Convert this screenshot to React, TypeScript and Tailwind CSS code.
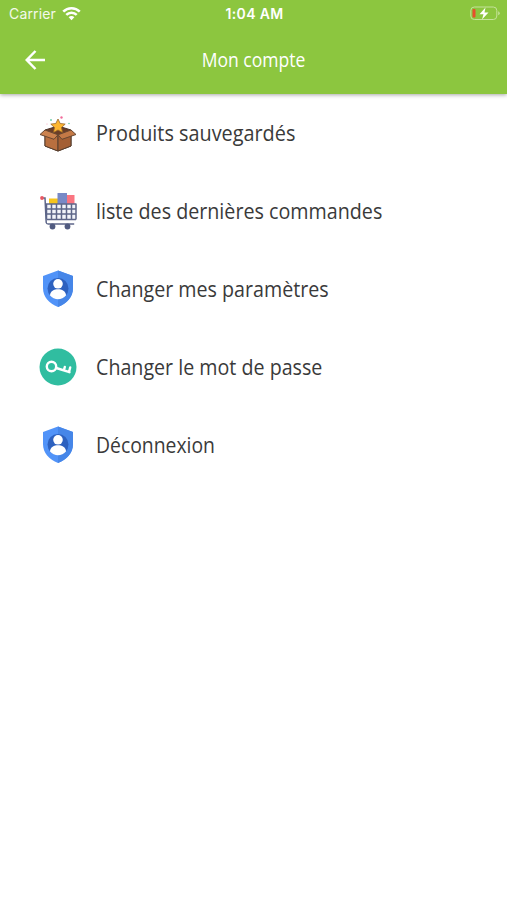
import React from "react";

function BoxIcon() {
  return (
    <svg viewBox="0 0 38 38" className="size-[38px]" strokeLinejoin="round">
      <path d="M6 16 19 12l13 4v16l-13 5-13-5z" fill="#6b3d26" stroke="#4b352c" />
      <path d="M6 20v12l13 5V21z" fill="#b96f3f" stroke="#59402f" />
      <path d="M32 20v12l-13 5V21z" fill="#a45f34" stroke="#59402f" />
      <path d="m19 5 2.200 4.500 5 .6-3.700 3.400 1 5-4.500-2.500-4.500 2.500 1-5-3.700-3.400 5-.6z" fill="#fdb62f" stroke="#98652a" strokeWidth=".8" />
      <path d="m6 16 13 4.800-4 4.500L1 20.500z" fill="#cc824e" stroke="#674731" />
      <path d="m32 16-13 4.800 4 4.500L37 20.500z" fill="#c47946" stroke="#674731" />
      <circle cx="22.500" cy="3.500" r="1.200" fill="#f26c9b" />
      <circle cx="12" cy="6" r=".9" fill="#65cba6" />
      <circle cx="30" cy="9.500" r=".8" fill="#65cba6" />
      <circle cx="8" cy="10" r=".6" fill="#f2a0b6" />
    </svg>
  );
}

function CartIcon() {
  return (
    <svg viewBox="0 0 38 38" className="size-[38px]" fill="none">
      <path d="M10 6.500h9v6h-9z" fill="#f6c51d" />
      <path d="M28 3h7.500v9.500H28z" fill="#fa7581" />
      <path d="M18.500 1H28v11.500h-9.500z" fill="#7889c6" />
      <path d="M8 12h29v16H8z" fill="#f2f4fa" />
      <path d="M7 12h30.500M7 17h30M7 22h30M8 27.500h29M7.500 12v15.500M12.500 12v15.500M17.500 12v15.500M22.500 12v15.500M27.500 12v15.500M32.500 12v15.500M37 12v15.500" stroke="#5d6689" strokeWidth="1.500" />
      <path d="M2.500 6H6l1.200 24.500q.2 1.500 2 1.500h26" stroke="#5d6689" strokeWidth="1.500" />
      <circle cx="3" cy="6" r="1.900" fill="#e95762" />
      <circle cx="13.500" cy="34.500" r="2.900" fill="#505a80" />
      <circle cx="28.500" cy="34.500" r="2.900" fill="#505a80" />
    </svg>
  );
}

function ShieldIcon() {
  return (
    <svg viewBox="0 0 38 38" className="size-[38px]">
      <path d="M19 .5 34 6v12c0 9-6 15.500-15 19C10 33.500 4 27 4 18V6z" fill="#5193f8" />
      <path d="M19 .5 34 6v12c0 9-6 15.500-15 19z" fill="#4686e8" />
      <circle cx="19" cy="18.500" r="10.500" fill="#2d61bf" />
      <circle cx="19" cy="13.800" r="4.800" fill="#fff" />
      <path d="M11 25.500c0-4.500 4.300-6.300 8-6.300s8 1.800 8 6.300a10.500 10.500 0 0 1-16 0" fill="#fff" />
    </svg>
  );
}

function KeyIcon() {
  return (
    <svg viewBox="0 0 38 38" className="size-[38px]" fill="none">
      <circle cx="19" cy="19" r="18.500" fill="#30bda0" />
      <g stroke="#fff" strokeWidth="2.400" strokeLinecap="round" strokeLinejoin="round">
        <circle cx="12.500" cy="18.500" r="4.700" />
        <path d="m17.200 20 13.300 4.200M25 22l.8-3M30 24l1.200-4.500" />
      </g>
    </svg>
  );
}

const items = [
  { label: "Produits sauvegardés", Icon: BoxIcon, scale: "scale-x-[.923]" },
  { label: "liste des dernières commandes", Icon: CartIcon, scale: "scale-x-[.916]" },
  { label: "Changer mes paramètres", Icon: ShieldIcon, scale: "scale-x-[.915]" },
  { label: "Changer le mot de passe", Icon: KeyIcon, scale: "scale-x-[.914]" },
  { label: "Déconnexion", Icon: ShieldIcon, scale: "scale-x-[.9]" },
];

export default function App() {
  return (
    <main className="min-h-[900px] w-full bg-white font-['Open_Sans',sans-serif] text-[#3a3a3a]">
      <header className="h-[94px] bg-[#8cc63f] text-white shadow-[0_1px_4px_rgba(0,0,0,.35)]">
        <div className="grid h-[27px] grid-cols-3 items-center pl-[9px] pr-[7px] font-[Inter,sans-serif] text-[14px]">
          <div className="flex items-center gap-[6px]">
            <span className="tracking-[.15px] text-white/90">Carrier</span>
            <svg viewBox="0 0 20 15" className="h-[15px] w-[19px]" fill="none" stroke="white" strokeWidth="2.700">
              <path d="M1.300 5.500a12.300 12.300 0 0 1 17.400 0M4.500 9a7.800 7.800 0 0 1 11 0" />
              <path d="M10 14.500 7 11.500a4.200 4.200 0 0 1 6 0z" fill="white" stroke="none" />
            </svg>
          </div>
          <span className="text-center font-semibold tracking-[.35px]">1:04 AM</span>
          <svg viewBox="0 0 30 15" className="h-[15px] w-[30px] justify-self-end" fill="none">
            <rect x=".8" y="1" width="26" height="12.500" rx="3.500" stroke="#c5e29b" />
            <path d="M28.200 5.300v4q1.500-.6 1.500-2t-1.500-2" fill="#c5e29b" />
            <rect x="2.500" y="3" width="3" height="8.500" rx="1" fill="#e84e2c" />
            <path d="m15.500 1.500-6 6.700h4L12 13.500l6.500-7h-4z" fill="white" />
          </svg>
        </div>
        <div className="grid h-[65px] grid-cols-[70px_1fr_70px] items-center">
          <svg viewBox="0 0 20 20" className="ml-[25px] size-5" fill="none" stroke="white" strokeWidth="2.500">
            <path d="M20 10H2M10.500 1 1.700 10l8.800 9" />
          </svg>
          <h1 className="scale-x-[.877] text-center text-[20px]">Mon compte</h1>
        </div>
      </header>
      <nav className="flex flex-col">
        {items.map(({ label, Icon, scale }) => (
          <button key={label} className="flex h-[78px] items-center gap-[19px] pl-[39px] text-left">
            <Icon />
            <span className={`origin-left whitespace-nowrap text-[21.500px] ${scale}`}>{label}</span>
          </button>
        ))}
      </nav>
    </main>
  );
}
